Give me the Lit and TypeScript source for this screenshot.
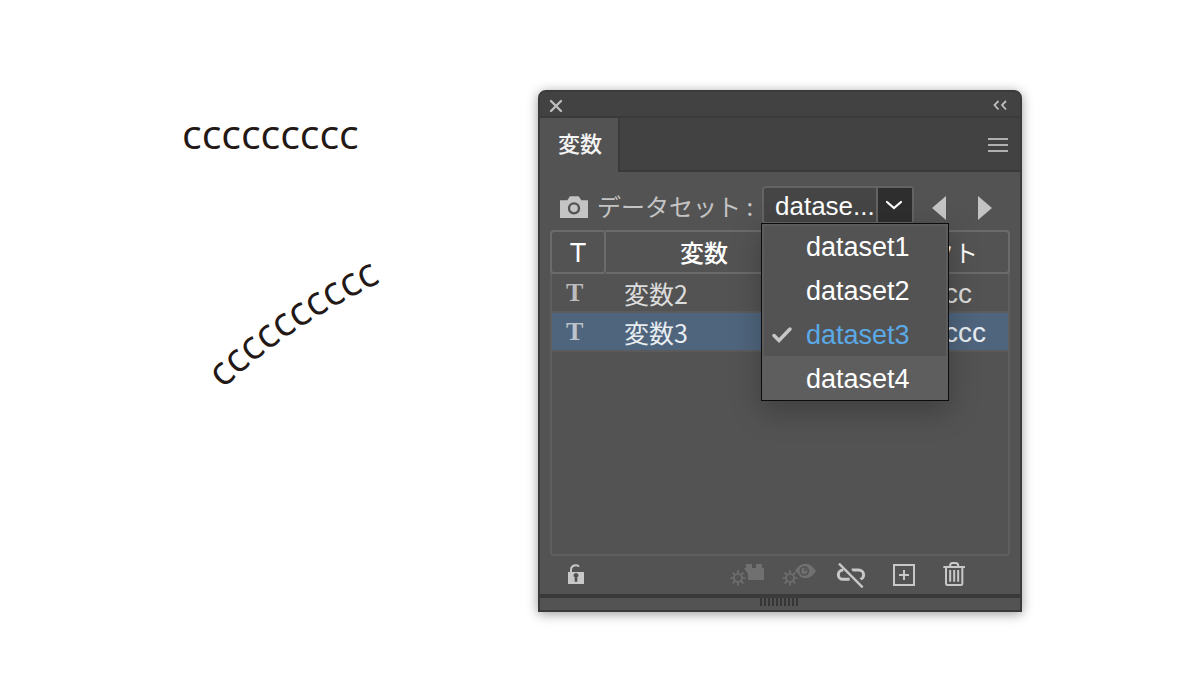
import { LitElement, html, css, svg } from "lit";
import { customElement, state } from "lit/decorators.js";

const gear = (cx: number, cy: number) => svg`
  <g transform="translate(${cx} ${cy})" fill="none" stroke="currentColor" stroke-width="5">
    <circle r="12"></circle>
    <path stroke-width="5" d="M0-14V-23M0 14V23M-14 0H-23M14 0H23M-10-10L-16-16M10-10L16-16M-10 10L-16 16M10 10L16 16"></path>
  </g>`;

@customElement("variables-panel")
export class VariablesPanel extends LitElement {
  static styles = css`
    :host {
      display: block;
      color: #ddd;
      font-family: "Liberation Sans", "Noto Sans CJK JP", sans-serif;
      font-size: 24px;
      line-height: 32px;
    }
    button {
      appearance: none;
      margin: 0;
      padding: 0;
      border: 0;
      background: none;
      color: inherit;
      font: inherit;
      display: flex;
      align-items: center;
      justify-content: center;
    }
    svg { display: block; flex: none; }
    .panel {
      border: 2px solid #3a3a3a;
      border-radius: 8px 8px 0 0;
      background: #535353;
      box-shadow: 0 2px 12px rgba(0, 0, 0, 0.4);
    }
    .titlebar {
      display: flex;
      align-items: center;
      justify-content: space-between;
      height: 24px;
      padding: 4px 12px 0 8px;
      box-sizing: border-box;
      background: #424242;
      border-radius: 6px 6px 0 0;
      color: #bdbdbd;
    }
    .tabs {
      display: flex;
      justify-content: space-between;
      height: 56px;
      box-sizing: border-box;
      background: #424242;
      border-top: 2px solid #3a3a3a;
      padding-right: 12px;
      box-shadow: inset 0 -2px #3a3a3a;
      color: #b0b0b0;
    }
    .tab {
      width: 80px;
      padding: 0 0 6px 2px;
      border-right: 2px solid #3a3a3a;
      background: #535353;
      color: #f4f4f4;
      font-family: "Noto Sans CJK JP", sans-serif;
      font-size: 22px;
      font-weight: 500;
    }
    .body { padding: 14px 10px 0; }
    .dataset {
      display: flex;
      align-items: center;
      height: 36px;
      padding-left: 9px;
      color: #c4c4c4;
    }
    .capture { padding-top: 6px; }
    .label {
      margin-left: 8px;
      padding-top: 4px;
      width: 165px;
      font-family: "Noto Sans CJK JP", sans-serif;
      white-space: nowrap;
    }
    .combo {
      position: relative;
      display: flex;
      width: 152px;
      height: 38px;
      margin-top: 2px;
      box-sizing: border-box;
      border: 2px solid #636363;
      border-radius: 4px;
      background: #454545;
    }
    .combo select {
      appearance: none;
      flex: 1;
      min-width: 0;
      margin: 0;
      padding: 2px 0 0 11px;
      border: 0;
      background: none;
      color: #fff;
      font: inherit;
      font-size: 26px;
      line-height: 32px;
    }
    .open {
      width: 36px;
      padding-right: 2px;
      box-sizing: border-box;
      border-left: 2px solid #636363;
      background: #2e2e2e;
      color: #fff;
    }
    .menu {
      position: absolute;
      z-index: 2;
      top: 35px;
      left: -3px;
      width: 188px;
      box-sizing: border-box;
      margin: 0;
      padding: 0;
      list-style: none;
      border: 1px solid #0c0c0c;
      background: #535353;
      box-shadow: inset 0 0 0 2px #5c5c5c, 0 10px 28px rgba(0, 0, 0, 0.25);
      font-size: 27px;
      color: #fff;
    }
    .menu button {
      width: 100%;
      height: 44px;
      padding-top: 2px;
      justify-content: flex-start;
      text-align: left;
    }
    .menu .current { color: #5aa9e6; }
    .menu .hover { background: #5e5e5e; }
    .tick { display: flex; width: 44px; padding-left: 9px; box-sizing: border-box; color: #c8c8c8; flex: none; }
    .arrows { display: flex; margin-left: 18px; gap: 32px; padding-top: 8px; }
    .list {
      margin-top: 8px;
      min-height: 322px;
      border: 2px solid #5f5f5f;
      border-radius: 4px;
    }
    table {
      width: calc(100% + 4px);
      margin: -2px;
      border-collapse: separate;
      border-spacing: 0;
      table-layout: fixed;
    }
    .col-type { width: 56px; }
    .col-name { width: 198px; }
    th {
      height: 44px;
      box-sizing: border-box;
      padding: 0;
      border: 2px solid #6b6b6b;
      border-left-width: 0;
      border-radius: 0 4px 4px 0;
      color: #fff;
      font-family: "Noto Sans CJK JP", sans-serif;
      font-weight: 500;
    }
    th:last-child { font-weight: 400; }
    th:first-child {
      border-left-width: 2px;
      border-radius: 4px;
      padding-top: 2px;
      font-family: "Liberation Sans", sans-serif;
      font-weight: 400;
      font-size: 27px;
    }
    td {
      height: 39px;
      box-sizing: border-box;
      padding: 0;
      border-bottom: 2px solid #5b5b5b;
      white-space: nowrap;
    }
    td:first-child {
      border-left: 2px solid #5f5f5f;
      padding-left: 14px;
      color: #bcbcbc;
      font: 700 26px/32px "Liberation Serif", serif;
    }
    td:nth-child(2) {
      padding-left: 18px;
      font-family: "Noto Sans CJK JP", sans-serif;
      font-size: 25px;
    }
    td:last-child {
      border-right: 2px solid #5f5f5f;
      padding: 2px 0 0 42px;
      font-size: 28px;
    }
    .selected td { background: #4f657d; color: #e8edf2; }
    .selected td:first-child { color: #bcc3ca; }
    .tools {
      display: flex;
      align-items: center;
      height: 38px;
      padding: 2px 42px 0 14px;
      box-sizing: border-box;
      color: #c8c8c8;
    }
    .tools .spacer { flex: 1; }
    .tools .group { display: flex; align-items: center; gap: 18px; }
    .tools button:disabled { color: #707070; }
    .grip {
      display: flex;
      justify-content: center;
      height: 16px;
      padding-right: 2px;
      box-sizing: border-box;
      border-top: 4px solid #3a3a3a;
    }
    .ticks {
      width: 38px;
      height: 8px;
      background: repeating-linear-gradient(90deg, #363636 0 2px, transparent 2px 4px);
    }
  `;

  @state() private current = "dataset3";
  @state() private hovered = "dataset4";

  private names = ["dataset1", "dataset2", "dataset3", "dataset4"];
  private rows = [
    { name: "変数2", object: "ccccccccc", selected: false },
    { name: "変数3", object: "cccccccccc", selected: true },
  ];

  private menu() {
    return html`<ul class="menu" role="listbox" aria-label="データセット">
      ${this.names.map(
        (n) => html`<li>
          <button
            role="option"
            aria-selected=${n === this.current ? "true" : "false"}
            class="${n === this.current ? "current" : ""} ${n === this.hovered ? "hover" : ""}"
            @click=${() => (this.current = n)}
            @mouseenter=${() => (this.hovered = n)}
          >
            <span class="tick">${n === this.current
              ? html`<svg width="22" height="18" viewBox="0 0 22 18"><path d="M3 9.500L8 14.500L19 3" fill="none" stroke="currentColor" stroke-width="3.500" stroke-linecap="round"></path></svg>`
              : ""}</span>${n}
          </button>
        </li>`
      )}
    </ul>`;
  }

  render() {
    return html`<section class="panel" aria-label="変数">
      <header class="titlebar">
        <button aria-label="閉じる">
          <svg width="16" height="16" viewBox="0 0 16 16"><path d="M3 3L13 13M13 3L3 13" stroke="currentColor" stroke-width="2.400" stroke-linecap="round"></path></svg>
        </button>
        <button aria-label="折りたたむ">
          <svg width="16" height="12" viewBox="0 0 16 12"><path d="M6.500 1L2.500 5L6.500 9.500M14 1L10 5L14 9.500" fill="none" stroke="currentColor" stroke-width="1.800"></path></svg>
        </button>
      </header>
      <nav class="tabs">
        <button class="tab">変数</button>
        <button aria-label="パネルメニュー">
          <svg width="20" height="14" viewBox="0 0 20 14"><path d="M0 1H20M0 7H20M0 13H20" stroke="currentColor" stroke-width="2"></path></svg>
        </button>
      </nav>
      <div class="body">
        <div class="dataset">
          <button class="capture" aria-label="データセットを取り込み">
            <svg width="30" height="24" viewBox="87 344 90 72">
              <path fill="currentColor" d="M90 360H112L120 348H146L154 360H174V413H90Z"></path>
              <circle cx="132" cy="384" r="15" fill="none" stroke="#535353" stroke-width="7"></circle>
            </svg>
          </button>
          <label class="label" for="dataset">データセット :</label>
          <div class="combo">
            <select id="dataset"><option selected>datase...</option></select>
            <button class="open" aria-label="開く">
              <svg width="18" height="10" viewBox="0 0 18 10"><path d="M2 2L9 8L16 2" fill="none" stroke="currentColor" stroke-width="2.200" stroke-linecap="round"></path></svg>
            </button>
            ${this.menu()}
          </div>
          <div class="arrows">
            <button aria-label="前のデータセット"><svg width="14" height="24" viewBox="0 0 14 24"><path fill="currentColor" d="M14 0V24L0 12Z"></path></svg></button>
            <button aria-label="次のデータセット"><svg width="14" height="24" viewBox="0 0 14 24"><path fill="currentColor" d="M0 0V24L14 12Z"></path></svg></button>
          </div>
        </div>
        <div class="list">
          <table>
            <colgroup><col class="col-type" /><col class="col-name" /><col /></colgroup>
            <thead><tr><th>T</th><th>変数</th><th>オブジェクト</th></tr></thead>
            <tbody>
              ${this.rows.map(
                (r) => html`<tr class=${r.selected ? "selected" : ""}><td>T</td><td>${r.name}</td><td>${r.object}</td></tr>`
              )}
            </tbody>
          </table>
        </div>
        <div class="tools">
          <button aria-label="ロック">
            <svg width="24" height="28" viewBox="102 66 72 84">
              <path fill="none" stroke="currentColor" stroke-width="6" d="M123 98V90C123 80 130 76 139 76Q144 76 147 80"></path>
              <path fill="currentColor" d="M114 96H162V132H114Z"></path>
              <path fill="#535353" d="M134 112A7 7 0 1 1 142 112V125H134Z"></path>
            </svg>
          </button>
          <span class="spacer"></span>
          <div class="group">
            <button disabled aria-label="オブジェクトを動的に">
              <svg width="34" height="28" viewBox="39 66 102 84">
                ${gear(63, 114)}
                <path fill="currentColor" d="M87 72H105V84H117V72H135V84H141V120H93V102L81 84H87Z"></path>
              </svg>
            </button>
            <button disabled aria-label="表示を動的に">
              <svg width="34" height="28" viewBox="195 66 102 84">
                ${gear(219, 114)}
                <path fill="currentColor" d="M234 93Q247 71 265 71T297 93Q284 115 265 115Q256 115 250 110Q244 98 234 93Z"></path>
                <circle cx="262" cy="93" r="12" fill="none" stroke="#535353" stroke-width="5"></circle>
                <circle cx="265" cy="89" r="4" fill="#535353"></circle>
              </svg>
            </button>
            <button aria-label="リンクを解除">
              <svg width="34" height="28" viewBox="354 66 102 84">
                <g fill="none" stroke="currentColor">
                  <path stroke-width="9" d="M382 90C362 90 362 118 382 118H401M407 90H427C448 90 448 118 428 119"></path>
                  <path stroke="#535353" stroke-width="13" d="M374 67L444 137"></path>
                  <path stroke-width="7" d="M369 71L440 142"></path>
                </g>
              </svg>
            </button>
            <button aria-label="新規変数">
              <svg width="34" height="28" viewBox="510 66 102 84">
                <path fill="none" stroke="currentColor" stroke-width="6" d="M534 75H594V135H534ZM564 90V120M549 105H579"></path>
              </svg>
            </button>
            <button aria-label="削除">
              <svg width="30" height="28" viewBox="666 66 90 84">
                <g fill="none" stroke="currentColor" stroke-width="6">
                  <path d="M682 81H747M702 79C702 72 706 69 710 69H718C723 69 727 72 727 79M690 81V131Q690 135 694 135H735Q739 135 739 131V81M702.500 90V125M714.500 90V125M726.500 90V125"></path>
                </g>
              </svg>
            </button>
          </div>
        </div>
      </div>
      <div class="grip"><div class="ticks"></div></div>
    </section>`;
  }
}

@customElement("app-root")
export class AppRoot extends LitElement {
  static styles = css`
    :host { display: block; min-height: 100vh; background: #fff; }
    .desk {
      display: grid;
      grid-template-columns: minmax(0, 538fr) minmax(484px, 484fr) minmax(0, 158fr);
      padding-top: 90px;
    }
    .art {
      padding-left: 182px;
      color: #231815;
      font-family: "Open Sans", sans-serif;
      font-size: 41px;
      line-height: 56px;
    }
    .line { margin: 0; padding-top: 15px; }
    .curve { display: block; margin-top: 79px; overflow: visible; }
    .curve text { fill: currentColor; font-size: 40px; }
  `;

  render() {
    return html`<main class="desk">
      <section class="art">
        <p class="line">ccccccccc</p>
        <svg class="curve" width="220" height="160" viewBox="182 240 220 160">
          <path id="bend" fill="none" d="M223 389Q296 319 403 272"></path>
          <text><textPath href="#bend">cccccccccc</textPath></text>
        </svg>
      </section>
      <variables-panel></variables-panel>
    </main>`;
  }
}
